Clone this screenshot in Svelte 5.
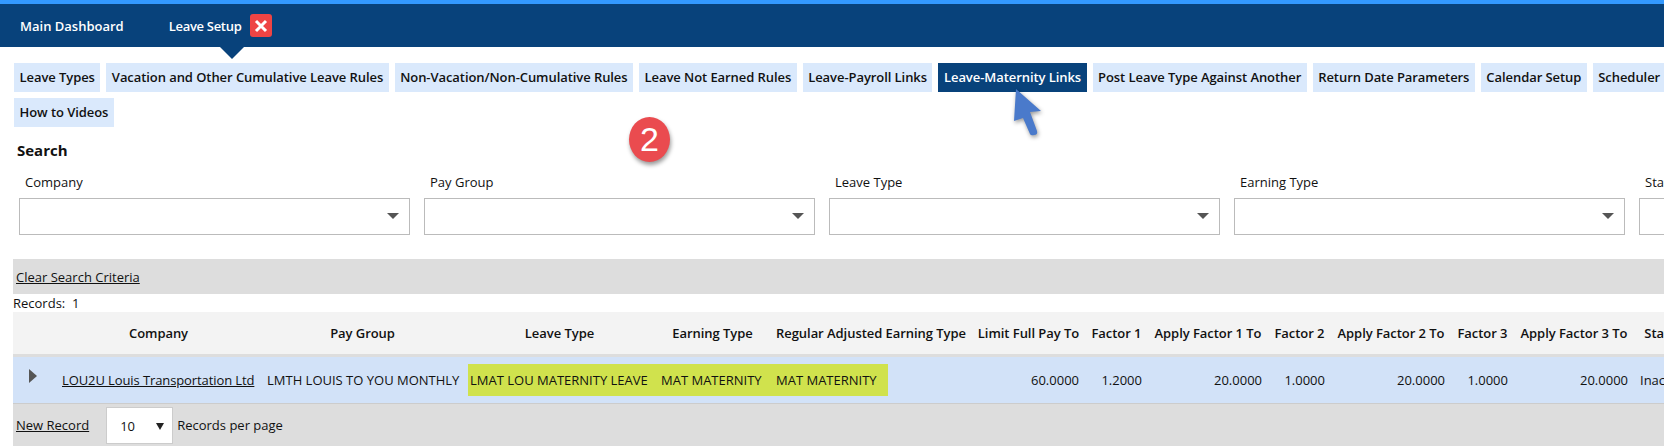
<script>
  const tabs = ['Leave Types','Vacation and Other Cumulative Leave Rules','Non-Vacation/Non-Cumulative Rules','Leave Not Earned Rules','Leave-Payroll Links','Leave-Maternity Links','Post Leave Type Against Another','Return Date Parameters','Calendar Setup','Scheduler','How to Videos'];
  const filters = ['Company','Pay Group','Leave Type','Earning Type','Status'];
  const heads = ['Limit Full Pay To','Factor 1','Apply Factor 1 To','Factor 2','Apply Factor 2 To','Factor 3','Apply Factor 3 To'];
  const nums = ['60.0000','1.2000','20.0000','1.0000','20.0000','1.0000','20.0000'];
</script>

<div class="page">
  <div class="topline"></div>
  <nav class="nav">
    <span class="navitem first">Main Dashboard</span>
    <span class="navitem current">Leave Setup
      <span class="close"><svg viewBox="0 0 22 22" width="22" height="22"><path d="M6 6l10 10M16 6L6 16" stroke="#fff" stroke-width="3" fill="none"/></svg></span>
    </span>
  </nav>
  <div class="tabs">
    {#each tabs as t}
      <span class="tab" class:active={t === 'Leave-Maternity Links'}>{t}</span>
    {/each}
  </div>
  <h2 class="search">Search</h2>
  <div class="filters">
    {#each filters as f}
      <div class="filter">
        <span class="flabel">{f}</span>
        <div class="select"><i class="drop"></i></div>
      </div>
    {/each}
  </div>
  <div class="clear"><a href="#a">Clear Search Criteria</a></div>
  <div class="records">Records:&nbsp; 1</div>
  <div class="thead cols">
    <span></span>
    <span class="c">Company</span>
    <span class="c shift">Pay Group</span>
    <span class="c shift">Leave Type</span>
    <span class="c">Earning Type</span>
    <span class="c">Regular Adjusted Earning Type</span>
    {#each heads as h}<span class="c">{h}</span>{/each}
    <span class="c">Status</span>
  </div>
  <div class="trow cols">
    <span class="arrow"><i></i></span>
    <span class="l"><a class="co" href="#b">LOU2U Louis Transportation Ltd</a></span>
    <span class="l">LMTH LOUIS TO YOU MONTHLY</span>
    <span class="l hl leave">LMAT LOU MATERNITY LEAVE</span>
    <span class="l hl">MAT MATERNITY</span>
    <span class="l hl reg">MAT MATERNITY</span>
    {#each nums as n}<span class="r">{n}</span>{/each}
    <span class="l">Inactive</span>
  </div>
  <div class="foot">
    <a href="#c">New Record</a>
    <div class="pager"><span>10</span><i></i></div>
    <span>Records per page</span>
  </div>

  <div class="badge">2</div>
  <svg class="cursor" viewBox="0 0 32 50" width="32" height="50">
    <path d="M4 2L29 24L18 25L25 44Q26 48 22 48Q19 49 18 47L11 31L2 34Z" fill="#4a7acb"/>
  </svg>
</div>

<style>
  :global(body) { margin: 0; background: #fff; overflow: hidden; }
  .page { position: relative; width: 1664px; height: 447px; overflow: hidden; font-family: "Open Sans", sans-serif; font-size: 13px; color: #111; }
  .topline { height: 4px; background: #3399ff; }
  .nav { height: 43px; background: #08427b; display: flex; align-items: center; padding-left: 20px; color: #fff; font-weight: 600; position: relative; }
  .nav::after { content: ""; position: absolute; left: 220px; top: 43px; border: 12px solid transparent; border-top-color: #08427b; border-bottom: 0; }
  .navitem.current { margin-left: 45px; display: flex; align-items: center; gap: 9px; letter-spacing: -0.3px; }
  .close { width: 22px; height: 23px; background: #ee4444; border-radius: 3px; display: flex; align-items: center; justify-content: center; }
  .tabs { width: 1700px; display: flex; flex-wrap: wrap; gap: 6px; padding: 16px 0 0 14px; box-sizing: border-box; }
  .tab { height: 29px; line-height: 29px; padding: 0 5.5px; background: #dae9fc; font-weight: 600; white-space: nowrap; letter-spacing: -0.07px; }
  .tab.active { background: #08427b; color: #fff; }
  .search { margin: 14px 0 0 17px; font-size: 15px; font-weight: 700; line-height: 18px; }
  .filters { display: flex; gap: 14px; margin: 14px 0 0 19px; width: 1800px; }
  .filter { width: 391px; flex: none; }
  .flabel { display: block; margin-left: 6px; line-height: 18px; height: 20px; }
  .select { height: 35px; border: 1px solid #bbb; position: relative; margin-top: 5px; }
  .drop { position: absolute; right: 10px; top: 14px; border: 6px solid transparent; border-top: 6px solid #555; border-bottom: 0; }
  .clear { margin: 24px 0 0 13px; height: 35px; background: #ddd; display: flex; align-items: center; padding-left: 3px; }
  a { color: #111; text-decoration: underline; }
  .co { letter-spacing: -0.1px; }
  .records { margin-left: 13px; height: 18px; line-height: 18px; }
  .cols { display: grid; grid-template-columns: 43px 205px 207px 187px 115px 202px 113px 63px 120px 63px 120px 63px 120px 60px; margin-left: 13px; width: 1700px; }
  .thead { height: 42px; background: #f3f3f3; border-bottom: 3px solid #ddd; align-items: center; font-weight: 600; letter-spacing: -0.05px; }
  .thead .c { text-align: center; white-space: nowrap; }
  .thead .shift { padding-right: 4px; }
  .trow { height: 46px; background: #d2e2f8; align-items: center; border-bottom: 1px solid #ccc; white-space: nowrap; }
  .trow .l { padding-left: 6px; }
  .trow .leave { padding-left: 2px; }
  .trow .r { text-align: right; padding-right: 6px; }
  .hl { background: #d0e24d; height: 32px; line-height: 32px; }
  .reg { margin-right: 84px; }
  .arrow i { display: block; margin-left: 16px; margin-top: -8px; border: 7px solid transparent; border-left: 8px solid #555; border-right: 0; width: 0; }
  .foot { margin-left: 13px; width: 1700px; height: 42px; background: #ddd; display: flex; align-items: center; padding-left: 3px; }
  .pager { width: 67px; height: 37px; margin: 0 4px 0 17px; background: #fff; border: 1px solid #ccc; box-sizing: border-box; display: flex; align-items: center; justify-content: space-between; padding: 2px 8px 0 13px; }
  .pager i { border: 4px solid transparent; border-top: 7px solid #222; border-bottom: 0; }
  .badge { position: absolute; left: 629px; top: 117px; width: 41px; height: 45px; border-radius: 50%; background: #ea4b4f; color: #fff; font: 34px/45px "Liberation Sans", sans-serif; text-align: center; box-shadow: 1px 3px 4px rgba(0,0,0,.4); }
  .cursor { position: absolute; left: 1012px; top: 87px; filter: drop-shadow(1px 2px 2px rgba(0,0,0,.4)); }
</style>
